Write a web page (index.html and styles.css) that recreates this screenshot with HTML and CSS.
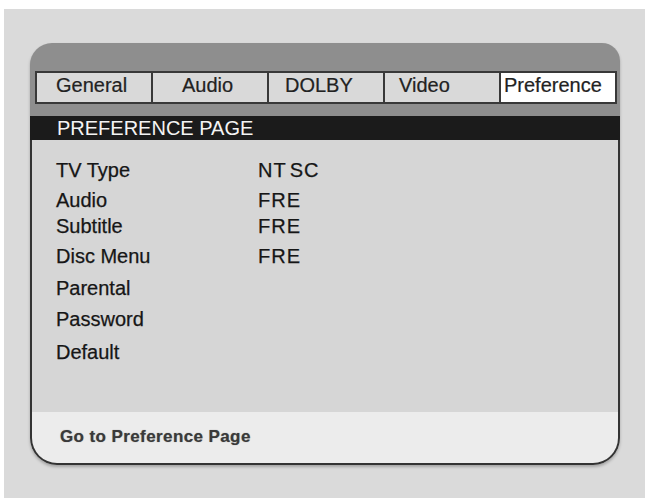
FILE: index.html
```html
<!DOCTYPE html>
<html>
<head>
<meta charset="utf-8">
<link rel="stylesheet" href="styles.css">
</head>
<body>
<div class="screen">
  <div class="panel">
    <div class="tabs">
      <div class="tab t-general">General</div>
      <div class="tab t-audio">Audio</div>
      <div class="tab t-dolby">DOLBY</div>
      <div class="tab t-video">Video</div>
      <div class="tab t-pref active">Preference</div>
    </div>
    <div class="header">PREFERENCE PAGE</div>
    <div class="content">
      <div class="rows">
        <div class="label">TV Type</div><div class="value">NT<span class="gap">S</span>C</div>
        <div class="label">Audio</div><div class="value">FRE</div>
        <div class="label">Subtitle</div><div class="value">FRE</div>
        <div class="label">Disc Menu</div><div class="value">FRE</div>
        <div class="label">Parental</div><div class="value"></div>
        <div class="label">Password</div><div class="value"></div>
        <div class="label">Default</div><div class="value"></div>
      </div>
    </div>
    <div class="footer">Go to Preference Page</div>
  </div>
</div>
</body>
</html>
```

FILE: styles.css
```css
html, body {
  margin: 0;
  padding: 0;
  background: #ffffff;
}
body {
  font-family: "Liberation Sans", Arial, sans-serif;
  width: 645px;
  height: 498px;
  overflow: hidden;
}
.screen {
  margin: 9px 0 0 4px;
  height: 489px;
  background: #dadada;
  padding: 34px 0 0 26px;
  box-sizing: border-box;
}
.panel {
  width: 590px;
  height: 422px;
  background: #8e8e8e;
  border-radius: 22px 18px 27px 27px;
  overflow: hidden;
  display: flex;
  flex-direction: column;
  box-shadow: 0 2px 3px rgba(0,0,0,0.25);
}
.tabs {
  display: grid;
  grid-template-columns: repeat(5, 1fr);
  margin: 28px 3px 0 5px;
  height: 33px;
  box-sizing: border-box;
  border-top: 2px solid #383838;
  border-bottom: 2px solid #383838;
  border-left: 2px solid #383838;
}
.tab {
  min-width: 0;
  background: #d9d9d9;
  border-right: 2px solid #383838;
  font-size: 20px;
  line-height: 25px;
  color: #222;
  white-space: nowrap;
  overflow: hidden;
  -webkit-text-stroke: 0.2px #222;
}
.tab.active {
  background: #ffffff;
}
.t-general { padding-left: 19px; }
.t-audio { padding-left: 29px; }
.t-dolby { padding-left: 16px; }
.t-video { padding-left: 14px; }
.t-pref { padding-left: 3px; }
.header {
  margin-top: 12px;
  height: 24px;
  background: #1b1b1b;
  color: #f4f4f4;
  font-size: 20px;
  line-height: 24px;
  padding-left: 27px;
}
.content {
  height: 272px;
  box-sizing: border-box;
  background: #d6d6d6;
  border-left: 2px solid #333;
  border-right: 2px solid #333;
  padding: 15px 0 0 24px;
}
.rows {
  display: grid;
  grid-template-columns: 202px 1fr;
  grid-template-rows: 30px 26px 30px 32px 31px 33px 30px;
  font-size: 20px;
  line-height: 30px;
  color: #161616;
  -webkit-text-stroke: 0.25px #161616;
}
.value {
  letter-spacing: 1px;
}
.gap {
  margin-left: 3px;
}
.footer {
  flex: 1;
  background: #ececec;
  border-left: 2px solid #333;
  border-right: 2px solid #333;
  border-bottom: 2px solid #333;
  border-radius: 0 0 27px 27px;
  padding: 15px 0 0 28px;
  font-size: 17px;
  font-weight: bold;
  letter-spacing: 0.4px;
  color: #3a3a3a;
  text-shadow: 0 0 1px rgba(0,0,0,0.45);
}
```
